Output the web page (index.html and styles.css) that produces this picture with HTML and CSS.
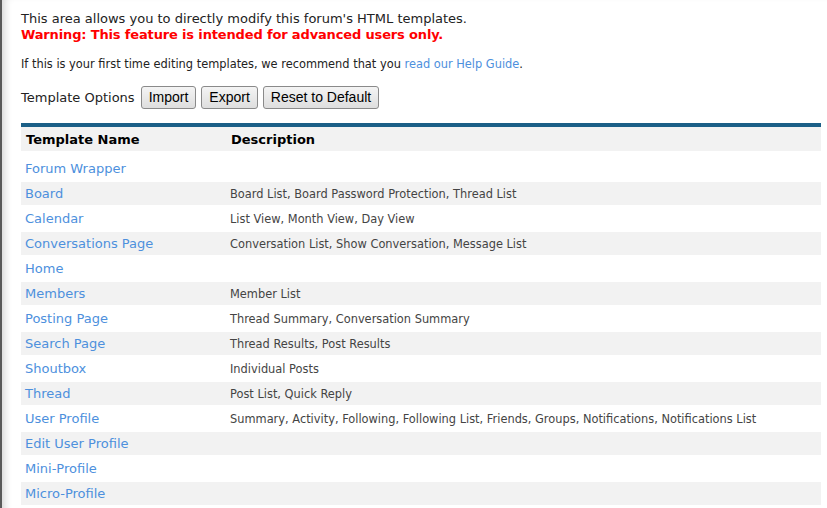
FILE: index.html
```html
<!DOCTYPE html>
<html>
<head>
<meta charset="utf-8">
<link rel="stylesheet" href="styles.css">
</head>
<body>
<div class="page">
  <div class="intro">
    <div class="lead">This area allows you to directly modify this forum's HTML templates.</div>
    <div class="warn">Warning: This feature is intended for advanced users only.</div>
  </div>
  <p class="note">If this is your first time editing templates, we recommend that you <a href="#">read our Help Guide</a>.</p>
  <div class="options">
    <span class="opt-label">Template Options</span>
    <button class="btn">Import</button>
    <button class="btn">Export</button>
    <button class="btn">Reset to Default</button>
  </div>
  <table class="tpl">
    <thead>
      <tr><th class="c-name">Template Name</th><th class="c-desc">Description</th></tr>
    </thead>
    <tbody>
      <tr class="first"><td><a href="#">Forum Wrapper</a></td><td></td></tr>
      <tr class="alt"><td><a href="#">Board</a></td><td>Board List, Board Password Protection, Thread List</td></tr>
      <tr><td><a href="#">Calendar</a></td><td>List View, Month View, Day View</td></tr>
      <tr class="alt"><td><a href="#">Conversations Page</a></td><td>Conversation List, Show Conversation, Message List</td></tr>
      <tr><td><a href="#">Home</a></td><td></td></tr>
      <tr class="alt"><td><a href="#">Members</a></td><td>Member List</td></tr>
      <tr><td><a href="#">Posting Page</a></td><td>Thread Summary, Conversation Summary</td></tr>
      <tr class="alt"><td><a href="#">Search Page</a></td><td>Thread Results, Post Results</td></tr>
      <tr><td><a href="#">Shoutbox</a></td><td>Individual Posts</td></tr>
      <tr class="alt"><td><a href="#">Thread</a></td><td>Post List, Quick Reply</td></tr>
      <tr><td><a href="#">User Profile</a></td><td>Summary, Activity, Following, Following List, Friends, Groups, Notifications, Notifications List</td></tr>
      <tr class="alt"><td><a href="#">Edit User Profile</a></td><td></td></tr>
      <tr><td><a href="#">Mini-Profile</a></td><td></td></tr>
      <tr class="alt"><td><a href="#">Micro-Profile</a></td><td></td></tr>
    </tbody>
  </table>
</div>
</body>
</html>
```
FILE: styles.css
```css
html, body {
  margin: 0;
  padding: 0;
  background: #fff;
}
body {
  font-family: "DejaVu Sans", Verdana, sans-serif;
  color: #222;
  height: 508px;
  overflow: hidden;
}
.page {
  border-left: 2px solid #5a5a5a;
  box-shadow: inset 8px 0 8px -6px #d0d0d0;
  padding: 11px 6px 0 19px;
  min-height: 600px;
}
.intro {
  font-size: 13px;
  line-height: 16px;
}
.lead { color: #222; }
.warn {
  color: #f00;
  font-weight: bold;
  letter-spacing: -0.15px;
}
.note {
  font-size: 11.4px;
  line-height: 14px;
  margin: 14px 0 0;
  color: #222;
}
.note a {
  color: #4d90dd;
  text-decoration: none;
}
.options {
  margin-top: 14px;
  display: flex;
  align-items: center;
  height: 24px;
}
.opt-label {
  font-size: 13px;
  margin-right: 6px;
}
.btn {
  font-family: "Liberation Sans", Arial, sans-serif;
  font-size: 14px;
  color: #000;
  height: 23px;
  padding: 0 7px;
  margin: 0 5px 0 0;
  border: 1px solid #8a8a8a;
  border-radius: 3px;
  background: linear-gradient(#f4f4f4, #dedede);
}
.tpl {
  margin-top: 14px;
  width: 800px;
  border-collapse: separate;
  border-spacing: 0;
  border-top: 4px solid #1b5f87;
}
.tpl th {
  background: #f2f2f2;
  text-align: left;
  font-size: 13px;
  font-weight: bold;
  color: #000;
  height: 24px;
  padding: 0 5px;
}
.tpl th.c-name { width: 195px; }
.tpl td {
  height: 23px;
  padding: 0 4px;
  border-top: 1px solid #fff;
  border-bottom: 1px solid #fff;
  font-size: 11.4px;
  color: #444;
}
.tpl td:first-child {
  font-size: 13px;
}
.tpl td a {
  color: #4d90dd;
  text-decoration: none;
}
.tpl tr.alt td { background: #f2f2f2; }
.tpl tr.first td { height: 23px; padding-top: 5px; }
```
